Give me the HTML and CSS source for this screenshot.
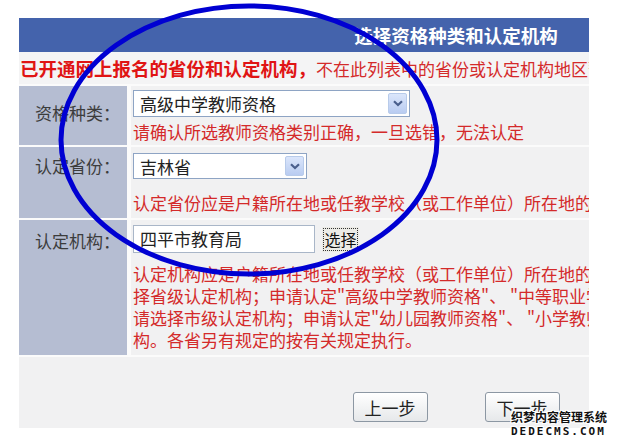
FILE: index.html
```html
<!DOCTYPE html>
<html lang="zh-CN">
<head>
    <meta charset="UTF-8">
    <title>选择资格种类和认定机构</title>
    <link rel="stylesheet" href="styles.css">
</head>
<body>

<div class="page">
    <!-- Form frame (the screenshot crops the wide form on the right) -->
    <div class="frame">
        <div class="form">
            <div class="title-bar">选择资格种类和认定机构</div>

            <div class="notice">
                <b>已开通网上报名的省份和认定机构，</b>不在此列表中的省份或认定机构地区暂不能进行网上报名，请到当地认定机构咨询。
            </div>

            <div class="rows">
                <!-- Qualification type -->
                <div class="label row-type">资格种类：</div>
                <div class="field row-type">
                    <div class="select select-wide">
                        <span>高级中学教师资格</span>
                        <i class="select-arrow">
                            <svg width="10" height="7" viewBox="0 0 10 7"><path d="M1 1.2 L5 5 L9 1.2" fill="none" stroke="#4a5f8c" stroke-width="2.2"/></svg>
                        </i>
                    </div>
                    <p class="hint hint-type">请确认所选教师资格类别正确，一旦选错，无法认定</p>
                </div>

                <!-- Province -->
                <div class="label row-province">认定省份：</div>
                <div class="field row-province">
                    <div class="select select-narrow">
                        <span>吉林省</span>
                        <i class="select-arrow">
                            <svg width="10" height="7" viewBox="0 0 10 7"><path d="M1 1.2 L5 5 L9 1.2" fill="none" stroke="#4a5f8c" stroke-width="2.2"/></svg>
                        </i>
                    </div>
                    <p class="hint hint-province">认定省份应是户籍所在地或任教学校（或工作单位）所在地的省份。</p>
                </div>

                <!-- Certifying body -->
                <div class="label row-body">认定机构：</div>
                <div class="field row-body">
                    <div class="pick">
                        <div class="text-input">四平市教育局</div>
                        <button class="pick-btn"><span>选择</span></button>
                    </div>
                    <p class="hint hint-body">
                        认定机构应是户籍所在地或任教学校（或工作单位）所在地的教育行政部门。申请认定"中等职业学校教师资格"，请选<br>
                        择省级认定机构；申请认定"高级中学教师资格"、 "中等职业学校实习指导教师资格"、"初级中学教师资格"，<br>
                        请选择市级认定机构；申请认定"幼儿园教师资格"、 "小学教师资格"，请选择县级认定机构或市级认定机<br>
                        构。各省另有规定的按有关规定执行。
                    </p>
                </div>
            </div>

            <div class="actions">
                <button class="step-btn">上一步</button>
                <button class="step-btn">下一步</button>
            </div>
        </div>
    </div>

    <!-- Hand-drawn highlight ring -->
    <svg class="ring" width="620" height="444" viewBox="0 0 620 444">
        <ellipse cx="249" cy="140" rx="188" ry="134" fill="none" stroke="#0000d2" stroke-width="5"/>
    </svg>

    <!-- Site watermark -->
    <div class="watermark">
        <div class="wm-cn">织梦内容管理系统</div>
        <div class="wm-en">DEDECMS.COM</div>
    </div>
</div>

</body>
</html>
```

FILE: styles.css
```css
/* Reset */
*, *::before, *::after {
    margin: 0;
    padding: 0;
    box-sizing: border-box;
}

:root {
    --bar-blue: #4463ac;
    --label-bg: #b5bdd2;
    --panel-bg: #f1f1f2;
    --gap-bg: #fbfbfb;
    --hint-red: #d42a2a;
    --cjk: "Noto Sans CJK SC", "Noto Sans", sans-serif;
}

body {
    background: #fff;
    font-family: var(--cjk);
    font-size: 17px;
    color: #333;
    overflow: hidden;
}

.page {
    position: relative;
    width: 620px;
    height: 444px;
    padding: 18px 0 0 19px;
}

/* Frame clips the wide form */
.frame {
    width: 570px;
    overflow: hidden;
    background: var(--panel-bg);
}

.form {
    width: 874px;
    background: var(--gap-bg);
}

/* Title bar */
.title-bar {
    height: 34px;
    line-height: 34px;
    background: var(--bar-blue);
    color: #fff;
    font-size: 18.5px;
    font-weight: bold;
    text-align: center;
}

/* Notice line */
.notice {
    height: 32px;
    line-height: 32px;
    margin-bottom: 2px;
    background: #f4f4f5;
    color: var(--hint-red);
    white-space: nowrap;
    padding-left: 1px;
}

.notice b {
    color: #e01414;
    font-size: 18.5px;
}

/* Rows */
.rows {
    display: grid;
    grid-template-columns: 108px 1fr;
    column-gap: 4px;
    row-gap: 2px;
}

.row-type { height: 59px; }
.row-province { height: 71px; }
.row-body { height: 135px; }

.label {
    background: var(--label-bg);
    color: #3c3c3c;
    text-align: right;
    padding-right: 7px;
    line-height: 22px;
}

.label.row-type { padding-top: 16px; }
.label.row-province { padding-top: 8px; }
.label.row-body { padding-top: 10px; }

.field {
    background: var(--panel-bg);
    padding: 4px 0 0 2px;
}

.field.row-province { padding-top: 6px; }
.field.row-body { padding-top: 5px; }

/* Fake select boxes */
.select {
    display: flex;
    align-items: center;
    justify-content: space-between;
    height: 27px;
    padding: 0 2px 0 6px;
    background: #fff;
    border: 1px solid #8ea4c4;
    color: #222;
}

.select-wide { width: 277px; }
.select-narrow { width: 174px; height: 26px; }

.select-arrow {
    display: flex;
    align-items: center;
    justify-content: center;
    width: 19px;
    height: 21px;
    border: 1px solid #b8cbea;
    border-radius: 2px;
    background: linear-gradient(#dbe6fb, #b9ccf1);
}

.select-narrow .select-arrow { height: 20px; }

.hint {
    color: var(--hint-red);
    line-height: 22px;
    white-space: nowrap;
}

.hint-type { margin-top: 4px; }
.hint-province { margin-top: 13px; }
.hint-body { margin-top: 10px; }

/* Certifying body picker */
.pick {
    display: flex;
    align-items: center;
    gap: 7px;
}

.text-input {
    width: 182px;
    height: 28px;
    line-height: 26px;
    padding-left: 6px;
    background: #fff;
    border: 1px solid #a9b6c8;
    color: #222;
}

.pick-btn {
    width: 37px;
    height: 25px;
    padding: 1px;
    border: none;
    background: #ecebe6;
    font-family: var(--cjk);
    font-size: 16px;
    color: #111;
    white-space: nowrap;
}

.pick-btn span {
    display: block;
    height: 100%;
    line-height: 21px;
    border: 1px dotted #333;
}

/* Footer buttons */
.actions {
    display: flex;
    justify-content: center;
    gap: 57px;
    height: 71px;
    padding-top: 35px;
    margin-top: 2px;
    background: var(--panel-bg);
}

.step-btn {
    width: 75px;
    height: 30px;
    border: 1px solid #8c97a3;
    border-radius: 3px;
    background: linear-gradient(#ffffff, #e6e8ea);
    font-family: var(--cjk);
    font-size: 17px;
    color: #222;
}

/* Overlays */
.ring {
    position: absolute;
    left: 0;
    top: 0;
    pointer-events: none;
}

.watermark {
    position: absolute;
    left: 511px;
    top: 409px;
    color: #111;
    font-weight: bold;
    text-shadow: 1px 0 #fff, -1px 0 #fff, 0 1px #fff, 0 -1px #fff,
                 1px 1px #fff, -1px -1px #fff, 1px -1px #fff, -1px 1px #fff;
}

.wm-cn {
    font-size: 12px;
    line-height: 15px;
}

.wm-en {
    font-family: "DejaVu Sans Mono", monospace;
    font-size: 11px;
    line-height: 15px;
    letter-spacing: 2px;
}
```
